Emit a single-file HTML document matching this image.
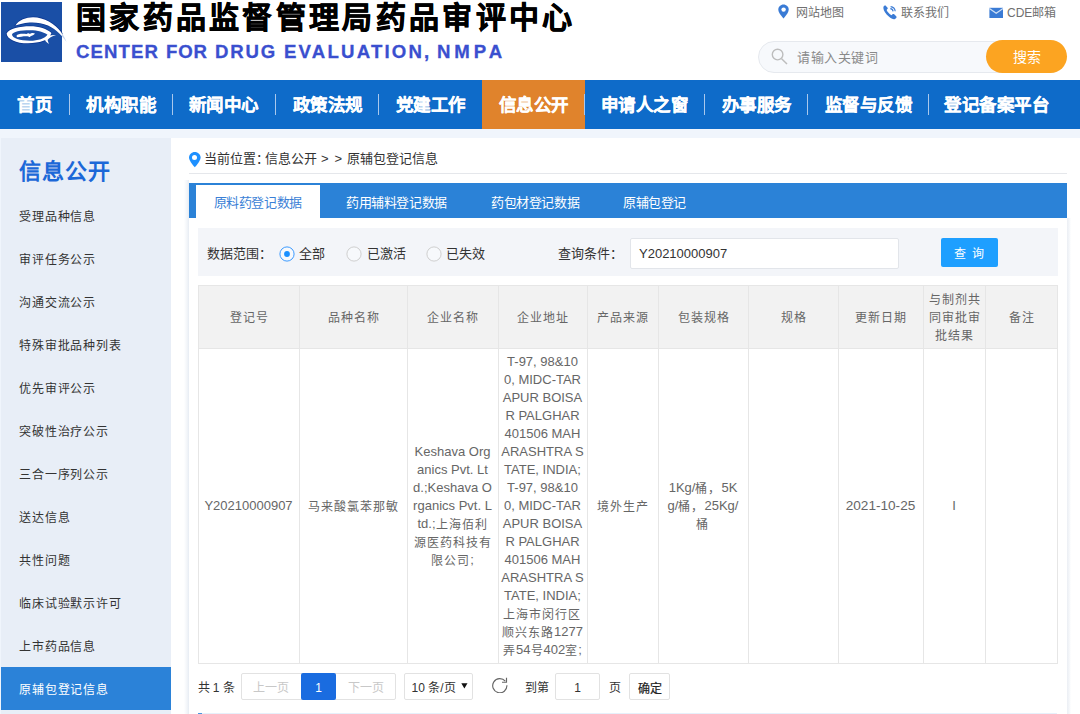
<!DOCTYPE html>
<html lang="zh-CN">
<head>
<meta charset="utf-8">
<style>
*{margin:0;padding:0;box-sizing:border-box}
html,body{width:1080px;height:714px;overflow:hidden;background:#fff;font-family:"Liberation Sans",sans-serif;color:#333}
.abs{position:absolute}
#hdr{position:absolute;left:0;top:0;width:1080px;height:80px;background:#fff}
#title{left:76px;top:1px;font-size:30px;line-height:34px;font-weight:900;color:#000;white-space:nowrap;letter-spacing:3.3px;-webkit-text-stroke:0.7px #000}
.ew{top:41px;font-size:18.6px;line-height:22px;font-weight:bold;color:#3a4fcf;-webkit-text-stroke:0.3px #3a4fcf;white-space:nowrap}
#etitle{left:78px;top:40px;font-size:18px;font-weight:bold;color:#3b4cc6;white-space:nowrap;letter-spacing:2.3px}
.tl{top:5px;font-size:12px;line-height:16px;color:#707070;white-space:nowrap}
#search{left:758px;top:41px;width:308px;height:32px;border:1px solid #e6e9ee;border-radius:16px;background:#f7f9fc}
#sbtn{left:986px;top:40px;width:81px;height:33px;border-radius:17px;background:#fca421;color:#fff;font-size:14px;text-align:center;line-height:35px}
#nav{left:0;top:80px;width:1080px;height:49px;background:#0e6bc9}
.ni{position:absolute;top:2px;height:47px;line-height:47px;font-size:17.5px;letter-spacing:0.6px;font-weight:bold;color:#fff;-webkit-text-stroke:0.2px #fff;white-space:nowrap}
.sep{position:absolute;top:14px;width:1px;height:21px;background:#a9c8ec}
#band{left:0;top:129px;width:1080px;height:585px;background:#f0f5fc}
#side{left:1px;top:138px;width:170px;height:576px;background:#e8eef7}
#side h2{position:absolute;left:18px;top:15px;font-size:22px;font-weight:bold;color:#1c68d8;letter-spacing:1px}
.si{position:absolute;left:19px;font-size:12px;letter-spacing:0.85px;color:#333;white-space:nowrap;line-height:20px}
#act{left:1px;top:667px;width:170px;height:43px;background:#2b82d8}
#main{left:171px;top:138px;width:909px;height:576px;background:#fff}
.tab{top:193px;font-size:13px;letter-spacing:-0.4px;color:#fff;white-space:nowrap;line-height:20px}
.ft{top:244px;font-size:13px;color:#333;white-space:nowrap;line-height:20px}
.radio{top:246px;width:15px;height:15px;border:1px solid #c9c9c9;border-radius:50%;background:#fff}
.radio.on{border-color:#1e9fff}
.radio.on::after{content:"";position:absolute;left:3px;top:3px;width:7px;height:7px;border-radius:50%;background:#1e9fff}
.cell{display:flex;align-items:center;justify-content:center;text-align:center;white-space:nowrap;font-size:13px;line-height:18px}
.th{top:286px;height:64px;color:#666;font-size:12px;letter-spacing:1px;padding-left:1px}
.td{top:349px;height:314px;color:#666}
.pg{font-size:12px;white-space:nowrap;line-height:18px}
.bc{top:150px;font-size:13px;line-height:18px;color:#333;white-space:nowrap}
.c{font-size:12px;letter-spacing:1px;position:relative;top:1px}
</style>
</head>
<body>
<div id="hdr">
  <svg class="abs" style="left:0;top:0" width="72" height="66" viewBox="0 0 72 66">
    <rect x="1" y="2" width="61" height="60" fill="#1a4fa6"/>
    <g fill="none" stroke="#0a3590" stroke-width="1.6" stroke-linejoin="round">
      <path d="M15.4,25.4 C19,20 26,17.5 33,17.3 C44,17.3 55,24 61,32 L62,34 C57,30 52,27 48,25.6 C40,22 30,21.8 23,23.5 C20,24.2 17.5,25 15.4,25.4 Z"/>
      <path d="M6.6,33.4 C9,28.5 20,26.3 30,26.3 C39,26.3 47,29 51.5,33 L50,36 C48,40 40,43 28,43.3 C16,43.3 7,39 6.6,33.4 Z"/>
    </g>
    <path fill="#fff" d="M15.4,25.4 C19,20 26,17.5 33,17.3 C44,17.3 55,24 61,32 L66,41 C62,36 57,30 48,25.6 C40,22 30,21.8 23,23.5 C20,24.2 17.5,25 15.4,25.4 Z"/>
    <path fill="#fff" fill-rule="evenodd" d="M6.6,33.4 C9,28.5 20,26.3 30,26.3 C39,26.3 47,29 51.5,33 L50,36 C48,40 40,43 28,43.3 C16,43.3 7,39 6.6,33.4 Z M12,34.6 C13,31.5 20,30.2 30,30.2 C38,30.2 44,32 47.5,34.8 C45,38.6 38,40.8 30,40.8 C20,40.8 12,38.2 12,34.6 Z"/>
    <path fill="#fff" d="M44.5,38.5 C47,35.5 51,34.8 56,35 C52,36.3 48.5,38.2 47.6,40 C47.8,41.5 48.5,42.8 49,44 C46.5,42.5 44.8,40.5 44.5,38.5 Z"/>
    <path fill="#fff" d="M16.5,35.8 C17.5,33.8 22,33.6 26.5,34 C27.5,33 29,32.8 30,34 C31,33 33.5,32.6 35,33.6 C34,35 32,35.8 30.6,36.2 C30,37 29.2,37.2 28.6,36.4 C25,35.8 20,36.8 17.5,37.2 C16.8,37 16.5,36.4 16.5,35.8 Z"/>
    <path fill="#c9d6ec" d="M62,33 C63.5,35.5 65,38 66.5,42 C65,40 63.5,38 62,36.5 Z"/>
  </svg>
  <div id="title" class="abs">国家药品监督管理局药品审评中心</div>
  <div class="abs ew" style="left:76px;letter-spacing:1.1px">CENTER</div>
  <div class="abs ew" style="left:166px;letter-spacing:0.85px">FOR</div>
  <div class="abs ew" style="left:215px;letter-spacing:1.8px">DRUG</div>
  <div class="abs ew" style="left:284px;letter-spacing:2.2px">EVALUATION,</div>
  <div class="abs ew" style="left:437px;letter-spacing:3.9px">NMPA</div>
  <svg class="abs" style="left:778px;top:4px" width="12" height="15" viewBox="0 0 12 15"><path d="M5.5 0.4C2.6 0.4 0.3 2.7 0.3 5.5c0 3.6 5.2 9 5.2 9s5.2-5.4 5.2-9C10.7 2.7 8.4 0.4 5.5 0.4z" fill="#3a7bd5"/><circle cx="5.6" cy="5.6" r="2.2" fill="#fff"/></svg>
  <div class="abs tl" style="left:796px">网站地图</div>
  <svg class="abs" style="left:882px;top:4px" width="16" height="16" viewBox="0 0 16 16"><path d="M3.2 1.2 L5.4 3.4 C5.9 3.9 5.9 4.6 5.4 5.1 L4.6 5.9 C5.4 7.8 7.2 9.9 9.6 11.2 L10.5 10.3 C11 9.8 11.7 9.8 12.2 10.3 L14.2 12.3 C14.7 12.8 14.7 13.5 14.2 14 L13 15 C11.8 15.6 9.5 15 6.8 12.6 C3.6 9.7 1.6 6.6 1.4 4.2 C1.3 3.1 1.7 2.4 2 2 Z" fill="#3a7bd5"/><path d="M8.6 2.6 A5.2 5.2 0 0 1 13.2 7.2 M8.3 4.6 A3 3 0 0 1 11.1 7.4" fill="none" stroke="#3a7bd5" stroke-width="1.1"/></svg>
  <div class="abs tl" style="left:901px">联系我们</div>
  <svg class="abs" style="left:989px;top:7px" width="15" height="12" viewBox="0 0 15 12"><rect x="0.4" y="0.8" width="13.6" height="10.2" fill="#3a7bd5"/><path d="M0.4 1.4 L7.2 6.2 L14 1.4" fill="none" stroke="#cfe0f6" stroke-width="1.2"/></svg>
  <div class="abs tl" style="left:1007px">CDE邮箱</div>
  <div id="search" class="abs"></div>
  <svg class="abs" style="left:770px;top:47px" width="20" height="19" viewBox="0 0 20 19"><circle cx="7.6" cy="7.6" r="5.3" fill="none" stroke="#bdbdbd" stroke-width="1.4"/><path d="M11.6 11.8 L17 17" stroke="#bdbdbd" stroke-width="1.5"/></svg>
  <div class="abs" style="left:797px;top:48px;font-size:13px;letter-spacing:0.6px;color:#8a8a8a;white-space:nowrap;line-height:20px">请输入关键词</div>
  <div id="sbtn" class="abs">搜索</div>
</div>
<div id="nav" class="abs">
  <div class="ni" style="left:17px">首页</div>
  <div class="sep" style="left:69px"></div>
  <div class="ni" style="left:86px">机构职能</div>
  <div class="sep" style="left:172px"></div>
  <div class="ni" style="left:188.5px">新闻中心</div>
  <div class="sep" style="left:275px"></div>
  <div class="ni" style="left:292.5px">政策法规</div>
  <div class="sep" style="left:378px"></div>
  <div class="abs" style="left:482px;top:0;width:103px;height:49px;background:#e0832c"></div>
  <div class="ni" style="left:395.5px">党建工作</div>
  <div class="ni" style="left:498.5px">信息公开</div>
  <div class="sep" style="left:584px"></div>
  <div class="ni" style="left:600.5px">申请人之窗</div>
  <div class="sep" style="left:704px"></div>
  <div class="ni" style="left:721.5px">办事服务</div>
  <div class="sep" style="left:807px"></div>
  <div class="ni" style="left:824.5px">监督与反馈</div>
  <div class="sep" style="left:928px"></div>
  <div class="ni" style="left:944px">登记备案平台</div>
</div>
<div id="band" class="abs"></div>
<div id="side" class="abs">
  <h2>信息公开</h2>
</div>
<div id="act" class="abs"></div>
<div id="main" class="abs"></div>
<!-- SIDEBAR ITEMS -->
<div class="si" style="top:207px">受理品种信息</div>
<div class="si" style="top:250px">审评任务公示</div>
<div class="si" style="top:293px">沟通交流公示</div>
<div class="si" style="top:336px">特殊审批品种列表</div>
<div class="si" style="top:379px">优先审评公示</div>
<div class="si" style="top:422px">突破性治疗公示</div>
<div class="si" style="top:465px">三合一序列公示</div>
<div class="si" style="top:508px">送达信息</div>
<div class="si" style="top:551px">共性问题</div>
<div class="si" style="top:594px">临床试验默示许可</div>
<div class="si" style="top:637px">上市药品信息</div>
<div class="si" style="top:680px;color:#fff">原辅包登记信息</div>
<!-- BREADCRUMB -->
<svg class="abs" style="left:189px;top:152px" width="12" height="16" viewBox="0 0 12 16"><path d="M5.8 0C2.6 0 0 2.5 0 5.6c0 3.8 5.8 9.7 5.8 9.7s5.8-5.9 5.8-9.7C11.6 2.5 9 0 5.8 0z" fill="#1e90ff"/><circle cx="5.5" cy="5.6" r="2.5" fill="#fff"/></svg>
<div class="abs bc" style="left:204px">当前位置</div>
<div class="abs bc" style="left:256px">：</div>
<div class="abs bc" style="left:265px">信息公开</div>
<div class="abs bc" style="left:321px;font-family:'Liberation Sans',sans-serif">&gt;</div>
<div class="abs bc" style="left:334.5px">&gt;</div>
<div class="abs bc" style="left:347px">原辅包登记信息</div>
<div class="abs" style="left:189px;top:173px;width:878px;height:1px;background:#e5e7eb"></div>
<!-- BOX -->
<div class="abs" style="left:189px;top:183px;width:878px;height:531px;border:none"></div>
<div class="abs" style="left:184px;top:180px;width:5px;height:534px;background:linear-gradient(to right,rgba(233,238,244,0),#f2f5f9 60%,#e7ecf3)"></div>
<div class="abs" style="left:1067px;top:218px;width:4px;height:496px;background:linear-gradient(to left,rgba(233,238,244,0),#f2f5f9 50%,#eceff4)"></div>
<div class="abs" style="left:189px;top:183px;width:878px;height:35px;background:#2b82d7"></div>
<div class="abs" style="left:196px;top:185px;width:124px;height:33px;background:#fff"></div>
<div class="abs tab" style="left:213.5px;color:#3b7fd6">原料药登记数据</div>
<div class="abs tab" style="left:346px">药用辅料登记数据</div>
<div class="abs tab" style="left:491px">药包材登记数据</div>
<div class="abs tab" style="left:623px">原辅包登记</div>
<!-- FILTER -->
<div class="abs" style="left:198px;top:228px;width:860px;height:48px;background:#f3f5f9"></div>
<div class="abs ft" style="left:207px">数据范围：</div>
<svg class="abs" style="left:278.5px;top:245.5px" width="16" height="16" viewBox="0 0 16 16"><circle cx="8" cy="8" r="7.1" fill="#f7f9fc" stroke="#3d9bff" stroke-width="1"/><circle cx="8" cy="8" r="2.9" fill="#1a90ff"/></svg>
<div class="abs ft" style="left:299px">全部</div>
<svg class="abs" style="left:345.5px;top:245.5px" width="16" height="16" viewBox="0 0 16 16"><circle cx="8" cy="8" r="7.1" fill="#f7f9fc" stroke="#cfcfcf" stroke-width="1"/></svg>
<div class="abs ft" style="left:367px">已激活</div>
<svg class="abs" style="left:425.5px;top:245.5px" width="16" height="16" viewBox="0 0 16 16"><circle cx="8" cy="8" r="7.1" fill="#f7f9fc" stroke="#cfcfcf" stroke-width="1"/></svg>
<div class="abs ft" style="left:446px">已失效</div>
<div class="abs ft" style="left:558px">查询条件：</div>
<div class="abs" style="left:630px;top:238px;width:269px;height:31px;background:#fff;border:1px solid #e2e5ea;border-radius:2px"></div>
<div class="abs ft" style="left:639px;color:#333">Y20210000907</div>
<div class="abs" style="left:941px;top:238px;width:57px;height:29px;background:#1e9fff;border-radius:2px"></div>
<div class="abs" style="left:953.5px;top:244.5px;color:#fff;font-size:12px;line-height:18px;letter-spacing:6px;white-space:nowrap">查询</div>
<!-- TABLE -->
<div class="abs" style="left:198px;top:285px;width:860px;height:64px;background:#f2f2f2"></div>
<div class="abs" style="left:198px;top:285px;width:860px;height:379px;border:1px solid #e6e6e6"></div>
<div class="abs" style="left:198px;top:348px;width:860px;height:1px;background:#e6e6e6"></div>
<div class="abs" style="left:299px;top:285px;width:1px;height:378px;background:#e6e6e6"></div>
<div class="abs" style="left:407px;top:285px;width:1px;height:378px;background:#e6e6e6"></div>
<div class="abs" style="left:498px;top:285px;width:1px;height:378px;background:#e6e6e6"></div>
<div class="abs" style="left:587px;top:285px;width:1px;height:378px;background:#e6e6e6"></div>
<div class="abs" style="left:658px;top:285px;width:1px;height:378px;background:#e6e6e6"></div>
<div class="abs" style="left:748px;top:285px;width:1px;height:378px;background:#e6e6e6"></div>
<div class="abs" style="left:838px;top:285px;width:1px;height:378px;background:#e6e6e6"></div>
<div class="abs" style="left:923px;top:285px;width:1px;height:378px;background:#e6e6e6"></div>
<div class="abs" style="left:985px;top:285px;width:1px;height:378px;background:#e6e6e6"></div>
<div class="abs cell th" style="left:198px;width:101px"><div>登记号</div></div>
<div class="abs cell th" style="left:299px;width:108px"><div>品种名称</div></div>
<div class="abs cell th" style="left:407px;width:91px"><div>企业名称</div></div>
<div class="abs cell th" style="left:498px;width:89px"><div>企业地址</div></div>
<div class="abs cell th" style="left:587px;width:71px"><div>产品来源</div></div>
<div class="abs cell th" style="left:658px;width:90px"><div>包装规格</div></div>
<div class="abs cell th" style="left:748px;width:90px"><div>规格</div></div>
<div class="abs cell th" style="left:838px;width:85px"><div>更新日期</div></div>
<div class="abs cell th" style="left:923px;width:62px"><div>与制剂共<br>同审批审<br>批结果</div></div>
<div class="abs cell th" style="left:985px;width:73px"><div>备注</div></div>
<div class="abs cell td" style="left:198px;width:101px"><div>Y20210000907</div></div>
<div class="abs cell td" style="left:299px;width:108px"><div><span class="c">马来酸氯苯那敏</span></div></div>
<div class="abs cell td" style="left:407px;width:91px"><div>Keshava Org<br>anics Pvt. Lt<br>d.;Keshava O<br>rganics Pvt. L<br>td.;<span class="c">上海佰利</span><br><span class="c">源医药科技有</span><br><span class="c">限公司</span>;</div></div>
<div class="abs cell td" style="left:498px;width:89px"><div>T-97, 98&amp;10<br>0, MIDC-TAR<br>APUR BOISA<br>R PALGHAR<br>401506 MAH<br>ARASHTRA S<br>TATE, INDIA;<br>T-97, 98&amp;10<br>0, MIDC-TAR<br>APUR BOISA<br>R PALGHAR<br>401506 MAH<br>ARASHTRA S<br>TATE, INDIA;<br><span class="c">上海市闵行区</span><br><span class="c">顺兴东路</span>1277<br><span class="c">弄</span>54<span class="c">号</span>402<span class="c">室</span>;</div></div>
<div class="abs cell td" style="left:587px;width:71px"><div><span class="c">境外生产</span></div></div>
<div class="abs cell td" style="left:658px;width:90px"><div>1Kg/<span class="c">桶，</span>5K<br>g/<span class="c">桶，</span>25Kg/<br><span class="c">桶</span></div></div>
<div class="abs cell td" style="left:748px;width:90px"></div>
<div class="abs cell td" style="left:838px;width:85px;font-size:13.6px"><div>2021-10-25</div></div>
<div class="abs cell td" style="left:923px;width:62px"><div>I</div></div>
<div class="abs cell td" style="left:985px;width:73px"></div>
<!-- PAGER -->
<div class="abs pg" style="left:197.5px;top:679px;color:#333">共 1 条</div>
<div class="abs" style="left:241px;top:673px;width:155px;height:27px;border:1px solid #e2e2e2;background:#fff;border-radius:2px"></div>
<div class="abs pg" style="left:241px;top:679px;width:60px;text-align:center;color:#c8c8c8">上一页</div>
<div class="abs" style="left:301px;top:673px;width:35px;height:27px;background:#1a6ce0;border-radius:2px"></div>
<div class="abs pg" style="left:301px;top:679px;width:35px;text-align:center;color:#fff">1</div>
<div class="abs pg" style="left:336px;top:679px;width:60px;text-align:center;color:#c8c8c8">下一页</div>
<div class="abs" style="left:404px;top:673px;width:69px;height:27px;border:1px solid #e2e2e2;background:#fff;border-radius:2px"></div>
<div class="abs pg" style="left:411.5px;top:679px;color:#333">10 条/页</div>
<svg class="abs" style="left:461px;top:683px" width="7" height="6" viewBox="0 0 7 6"><path d="M0.3 0.3H6.5L3.4 5.6Z" fill="#111"/></svg>
<svg class="abs" style="left:490.5px;top:676px" width="18" height="17" viewBox="0 0 18 17"><path d="M14.3 5.2A7.1 7.1 0 1 0 15.9 9.3" fill="none" stroke="#666" stroke-width="1.15"/><path d="M15.5 1.8V6.2H11" fill="none" stroke="#666" stroke-width="1.15"/></svg>
<div class="abs pg" style="left:524.5px;top:679px;color:#333">到第</div>
<div class="abs" style="left:555px;top:673px;width:45px;height:27px;border:1px solid #e2e2e2;background:#fff;border-radius:2px"></div>
<div class="abs pg" style="left:555px;top:679px;width:45px;text-align:center;color:#333">1</div>
<div class="abs pg" style="left:609px;top:679px;color:#333">页</div>
<div class="abs" style="left:629px;top:673px;width:41px;height:27px;border:1px solid #e2e2e2;background:#fff;border-radius:2px"></div>
<div class="abs pg" style="left:629px;top:680px;width:41px;text-align:center;color:#222;-webkit-text-stroke:0.2px #222">确定</div>
<div class="abs" style="left:198px;top:713px;width:859px;height:1px;background:#e6f0fb"></div>
<div class="abs" style="left:198px;top:713px;width:4px;height:1px;background:#4a95e0"></div>
</body>
</html>
